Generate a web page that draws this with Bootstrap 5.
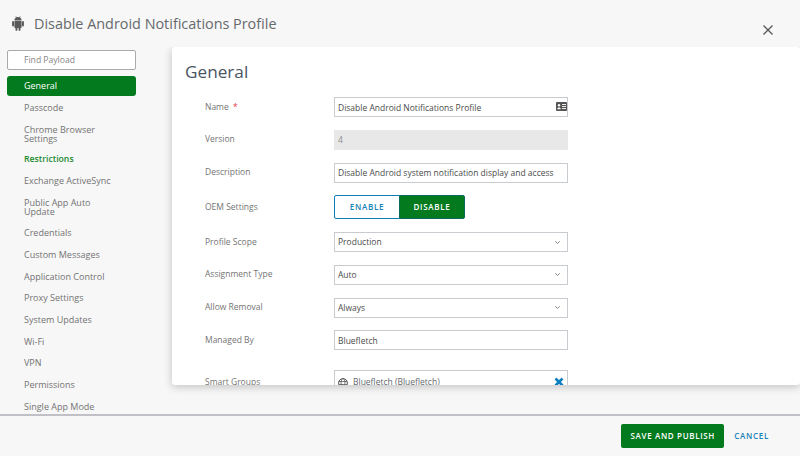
<!DOCTYPE html>
<html lang="en">
<head>
<meta charset="utf-8">
<title>Disable Android Notifications Profile</title>
<link href="https://cdn.jsdelivr.net/npm/bootstrap@5.3.0/dist/css/bootstrap.min.css" rel="stylesheet">
<style>
html,body{height:456px;overflow:hidden}
body{background:#f7f7f7;font-family:"Open Sans","Noto Sans",sans-serif;font-size:9px;color:#666}
.shell{height:456px}
.topbar{height:47px;padding:0 26px 0 12px}
.topbar h1{font-size:14.4px;font-weight:400;margin:0 0 0 10px;color:#66696c}
.bodyzone{height:367px;overflow:hidden}
.sidezone{width:172px;flex:none;padding:3px 36px 0 7px}
.finder{height:20px;font-size:8.6px;padding:0 16px;border:1.5px solid #aaa;border-radius:2px;background:#fff;color:#777;box-shadow:none}
.finder::placeholder{color:#868686}
.payloads{margin-top:6px}
.payloads .list-group-item{background:transparent;border:0;padding:0 0 0 17px;color:#737373;font-size:9px;line-height:9px;display:flex;align-items:center;min-height:21.67px}
.payloads .list-group-item.on{background:#047a1e;color:#fff;border-radius:3px;min-height:20px;padding-bottom:2px;margin-bottom:.3px}
.payloads .list-group-item.done{color:#1c8a2f;font-weight:600;font-size:8.7px}
.payloads .list-group-item.two{min-height:30.4px;padding-top:1px}
.sheet{flex:1;height:338px;overflow:hidden;background:#fff;border-radius:3px;box-shadow:0 2px 8px rgba(0,0,0,.22);padding:13px 0 0 13px}
.sheet h2{font-size:17.2px;font-weight:400;color:#4a5563;margin:0 0 13px;line-height:24px}
.frow{display:flex;align-items:center;height:20px;margin-bottom:12.75px;padding-left:20px}
.frow.tall{height:24px}
.frow.sg{margin-top:20px;height:40px;align-items:flex-start}
.frow.sg>label{margin-top:6px}
.frow>label{width:129px;flex:none;font-size:8.5px;color:#747474}
.req{color:#e8394a;margin-left:2px}
.fbox{width:234px;flex:none;position:relative}
.sheet .form-control,.sheet .form-select{height:20px;min-height:0;font-size:8.5px;line-height:18px;padding:0 3px;border:1px solid #c8ccd0;border-radius:0;color:#4c4c4c;box-shadow:none}
.sheet .form-control:disabled{background:#e8e8e8;border-color:#e8e8e8;color:#8c8c8c}
.sheet .form-select{background-size:5px 5px;background-position:right 7px center;padding-right:20px}
.cardicon{position:absolute;right:1px;top:5px;width:11px;height:9px}
.toggle .btn{width:66px;height:24px;font-size:8px;font-weight:600;letter-spacing:.7px;padding:0;border-radius:2px;border:1px solid #0b7fb5}
.toggle .btn.offb{background:#fff;color:#1782b8}
.toggle .btn.onb{background:#047a1e;color:#fff;border-color:#0b6a5c}
.chip{height:40px;border:1px solid #c8ccd0;display:flex;align-items:flex-start;padding:4px 3px;color:#62676b;position:relative;font-size:8.5px}
.chip span{margin-left:5px;line-height:13px}
.chip .gl{width:10px;height:10px;margin-top:3px;flex:none}
.chip .xm{position:absolute;right:3px;top:6px;width:10px;height:10px}
.bottombar{height:42px;border-top:2px solid #c0c0c6;padding-right:31px;padding-top:8px;align-items:flex-start}
.savebtn{background:#047a1e;border:0;color:#fff;height:24px;width:103px;padding:0;font-size:8px;font-weight:600;letter-spacing:.65px;border-radius:2px}
.savebtn:hover{background:#047a1e;color:#fff}
.cancelbtn{color:#1782b8;font-size:8px;font-weight:600;letter-spacing:.7px;padding:0;margin-left:10px;height:24px;border:0;text-decoration:none}
.closex{width:12px;height:12px;padding:0;border:0;background:none;margin-top:9px}
</style>
</head>
<body>
<div class="shell d-flex flex-column">
  <header class="topbar d-flex align-items-center">
    <svg width="12" height="15" viewBox="0 0 12 15" aria-hidden="true"><g fill="#5a5a5a"><path d="M2.4 4.6a3.6 3.6 0 0 1 7.2 0z"/><rect x="2.4" y="5.1" width="7.2" height="6.8" rx=".7"/><rect x=".1" y="5.1" width="1.9" height="5.4" rx=".9"/><rect x="10" y="5.1" width="1.9" height="5.4" rx=".9"/><rect x="3.5" y="11" width="1.9" height="3.8" rx=".9"/><rect x="6.6" y="11" width="1.9" height="3.8" rx=".9"/><path d="M3.7 .2l1.1 1.8M8.3 .2L7.2 2" stroke="#5a5a5a" stroke-width=".6" fill="none"/></g></svg>
    <h1>Disable Android Notifications Profile</h1>
    <button type="button" class="closex ms-auto" aria-label="Close"><svg width="12" height="12" viewBox="0 0 12 12"><path d="M1.5 1.5l9 9M10.5 1.5l-9 9" stroke="#555" stroke-width="1.3"/></svg></button>
  </header>
  <div class="bodyzone d-flex">
    <nav class="sidezone">
      <input class="form-control finder" type="text" placeholder="Find Payload">
      <div class="list-group payloads">
        <a class="list-group-item on">General</a>
        <a class="list-group-item">Passcode</a>
        <a class="list-group-item two">Chrome Browser<br>Settings</a>
        <a class="list-group-item done">Restrictions</a>
        <a class="list-group-item">Exchange ActiveSync</a>
        <a class="list-group-item two">Public App Auto<br>Update</a>
        <a class="list-group-item">Credentials</a>
        <a class="list-group-item">Custom Messages</a>
        <a class="list-group-item">Application Control</a>
        <a class="list-group-item">Proxy Settings</a>
        <a class="list-group-item">System Updates</a>
        <a class="list-group-item">Wi-Fi</a>
        <a class="list-group-item">VPN</a>
        <a class="list-group-item">Permissions</a>
        <a class="list-group-item">Single App Mode</a>
      </div>
    </nav>
    <main class="sheet">
      <h2>General</h2>
      <div class="frow"><label>Name <span class="req">*</span></label><div class="fbox"><input class="form-control" value="Disable Android Notifications Profile">
        <svg class="cardicon" viewBox="0 0 11 9"><rect width="11" height="9" rx="1" fill="#555"/><circle cx="3" cy="3.3" r="1.2" fill="#fff"/><path d="M1.2 7.2c0-2.2 3.6-2.2 3.6 0z" fill="#fff"/><path d="M6 2.5h4M6 4.5h4M6 6.5h4" stroke="#fff" stroke-width=".9"/></svg></div></div>
      <div class="frow"><label>Version</label><div class="fbox"><input class="form-control" value="4" disabled></div></div>
      <div class="frow"><label>Description</label><div class="fbox"><input class="form-control" value="Disable Android system notification display and access"></div></div>
      <div class="frow tall"><label>OEM Settings</label><div class="btn-group toggle"><button type="button" class="btn offb">ENABLE</button><button type="button" class="btn onb">DISABLE</button></div></div>
      <div class="frow"><label>Profile Scope</label><div class="fbox"><select class="form-select"><option>Production</option></select></div></div>
      <div class="frow"><label>Assignment Type</label><div class="fbox"><select class="form-select"><option>Auto</option></select></div></div>
      <div class="frow"><label>Allow Removal</label><div class="fbox"><select class="form-select"><option>Always</option></select></div></div>
      <div class="frow"><label>Managed By</label><div class="fbox"><input class="form-control" value="Bluefletch"></div></div>
      <div class="frow sg"><label>Smart Groups</label><div class="fbox"><div class="chip">
        <svg class="gl" viewBox="0 0 10 10"><circle cx="5" cy="5" r="4.4" fill="none" stroke="#555" stroke-width="1"/><ellipse cx="5" cy="5" rx="2" ry="4.4" fill="none" stroke="#555" stroke-width=".8"/><path d="M.8 3.5h8.4M.8 6.5h8.4" stroke="#555" stroke-width=".8"/></svg>
        <span>Bluefletch (Bluefletch)</span>
        <svg class="xm" viewBox="0 0 10 10"><path d="M1.5 1.5l7 7M8.5 1.5l-7 7" stroke="#0d7fc0" stroke-width="2.6"/></svg>
      </div></div></div>
    </main>
  </div>
  <footer class="bottombar d-flex justify-content-end">
    <button type="button" class="btn savebtn">SAVE AND PUBLISH</button>
    <button type="button" class="btn btn-link cancelbtn">CANCEL</button>
  </footer>
</div>
<script src="https://cdn.jsdelivr.net/npm/bootstrap@5.3.0/dist/js/bootstrap.bundle.min.js"></script>
</body>
</html>
